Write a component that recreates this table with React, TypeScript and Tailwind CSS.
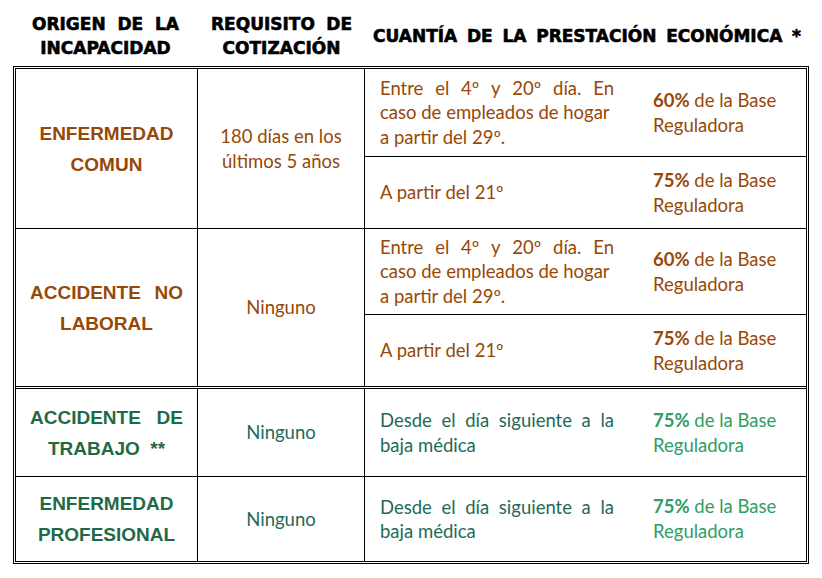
type Tone = 'brown' | 'green';

type Sub = { desc: string[]; pct: string; h: string };

type RowData = {
  label: string[][];
  req: string[];
  tone: Tone;
  subs: Sub[];
  top: string;
};

const rows: RowData[] = [
  {
    label: [['ENFERMEDAD'], ['COMUN']],
    req: ['180 días en los', 'últimos 5 años'],
    tone: 'brown',
    top: '',
    subs: [
      { desc: ['Entre el 4º y 20º día. En', 'caso de empleados de hogar', 'a partir del 29º.'], pct: '60%', h: 'h-[88px] border-b border-black' },
      { desc: ['A partir del 21º'], pct: '75%', h: 'h-[71px]' },
    ],
  },
  {
    label: [['ACCIDENTE', 'NO'], ['LABORAL']],
    req: ['Ninguno'],
    tone: 'brown',
    top: 'border-t border-black',
    subs: [
      { desc: ['Entre el 4º y 20º día. En', 'caso de empleados de hogar', 'a partir del 29º.'], pct: '60%', h: 'h-[86px] border-b border-black' },
      { desc: ['A partir del 21º'], pct: '75%', h: 'h-[71px]' },
    ],
  },
  {
    label: [['ACCIDENTE', 'DE'], ['TRABAJO  **']],
    req: ['Ninguno'],
    tone: 'green',
    top: 'border-t-[3px] border-double border-black',
    subs: [{ desc: ['Desde el día siguiente a la', 'baja médica'], pct: '75%', h: 'h-[87px]' }],
  },
  {
    label: [['ENFERMEDAD'], ['PROFESIONAL']],
    req: ['Ninguno'],
    tone: 'green',
    top: 'border-t border-black',
    subs: [{ desc: ['Desde el día siguiente a la', 'baja médica'], pct: '75%', h: 'h-[84px]' }],
  },
];

// first line of a multi-line description is justified in the original
function Justified({ words }: { words: string[] }) {
  return (
    <div className="flex justify-between">
      {words.map((w, i) => (
        <span key={i}>{w}</span>
      ))}
    </div>
  );
}

function TableRow({ row }: { row: RowData }) {
  const green = row.tone === 'green';
  const labelColor = green ? 'text-[#1f6a46]' : 'text-[#984806]';
  const bodyColor = green ? 'text-[#1e6a58]' : 'text-[#984806]';
  const pctColor = green ? 'text-[#2f9d64]' : 'text-[#984806]';

  return (
    <div className={`flex ${row.top}`}>
      <div
        className={`w-[182px] shrink-0 border-r border-black flex flex-col items-center justify-center font-bold text-[19px] leading-[31px] [font-family:'Liberation_Sans',Arial,sans-serif] ${labelColor}`}
      >
        {row.label.map((line, i) =>
          line.length > 1 ? (
            <div key={i} className="w-[153px]">
              <Justified words={line} />
            </div>
          ) : (
            <div key={i} className="whitespace-pre">
              {line[0]}
            </div>
          ),
        )}
      </div>
      <div
        className={`w-[167px] shrink-0 border-r border-black flex flex-col items-center justify-center text-[18.5px] leading-[24.5px] [font-family:Lato,sans-serif] ${bodyColor}`}
      >
        {row.req.map((l, i) => (
          <div key={i}>{l}</div>
        ))}
      </div>
      <div className="flex-1 flex flex-col">
        {row.subs.map((s, i) => (
          <div key={i} className={`flex items-center pl-[15px] text-[18.5px] leading-[24.5px] [font-family:Lato,sans-serif] ${s.h}`}>
            <div className={`w-[234px] ${bodyColor}`}>
              {s.desc.map((l, j) =>
                s.desc.length > 1 && j === 0 ? <Justified key={j} words={l.split(' ')} /> : <div key={j}>{l}</div>,
              )}
            </div>
            <div className={`ml-[39px] leading-[25px] ${pctColor}`}>
              <div>
                <span className="font-bold">{s.pct}</span> de la Base
              </div>
              <div>Reguladora</div>
            </div>
          </div>
        ))}
      </div>
    </div>
  );
}

export default function App() {
  return (
    <div className="w-[822px] h-[578px] bg-white overflow-hidden">
      {/* column headings */}
      <div className="ml-[13px] w-[796px] h-[66px] pt-[12px] flex items-start text-black font-bold text-[17px] leading-[24px] [font-family:'DejaVu_Sans',sans-serif] [-webkit-text-stroke:0.6px_black]">
        <div className="w-[185px] flex flex-col items-center">
          <div className="w-[147px]">
            <Justified words={['ORIGEN', 'DE', 'LA']} />
          </div>
          <div>INCAPACIDAD</div>
        </div>
        <div className="w-[167px] flex flex-col items-center">
          <div className="w-[141px]">
            <Justified words={['REQUISITO', 'DE']} />
          </div>
          <div>COTIZACIÓN</div>
        </div>
        <div className="flex-1 h-[48px] flex items-center justify-center">
          <div className="w-[428px]">
            <Justified words={['CUANTÍA', 'DE', 'LA', 'PRESTACIÓN', 'ECONÓMICA', '*']} />
          </div>
        </div>
      </div>

      {/* table */}
      <div className="ml-[13px] w-[796px] border-[3px] border-double border-black">
        {rows.map((r, i) => (
          <TableRow key={i} row={r} />
        ))}
      </div>
    </div>
  );
}
